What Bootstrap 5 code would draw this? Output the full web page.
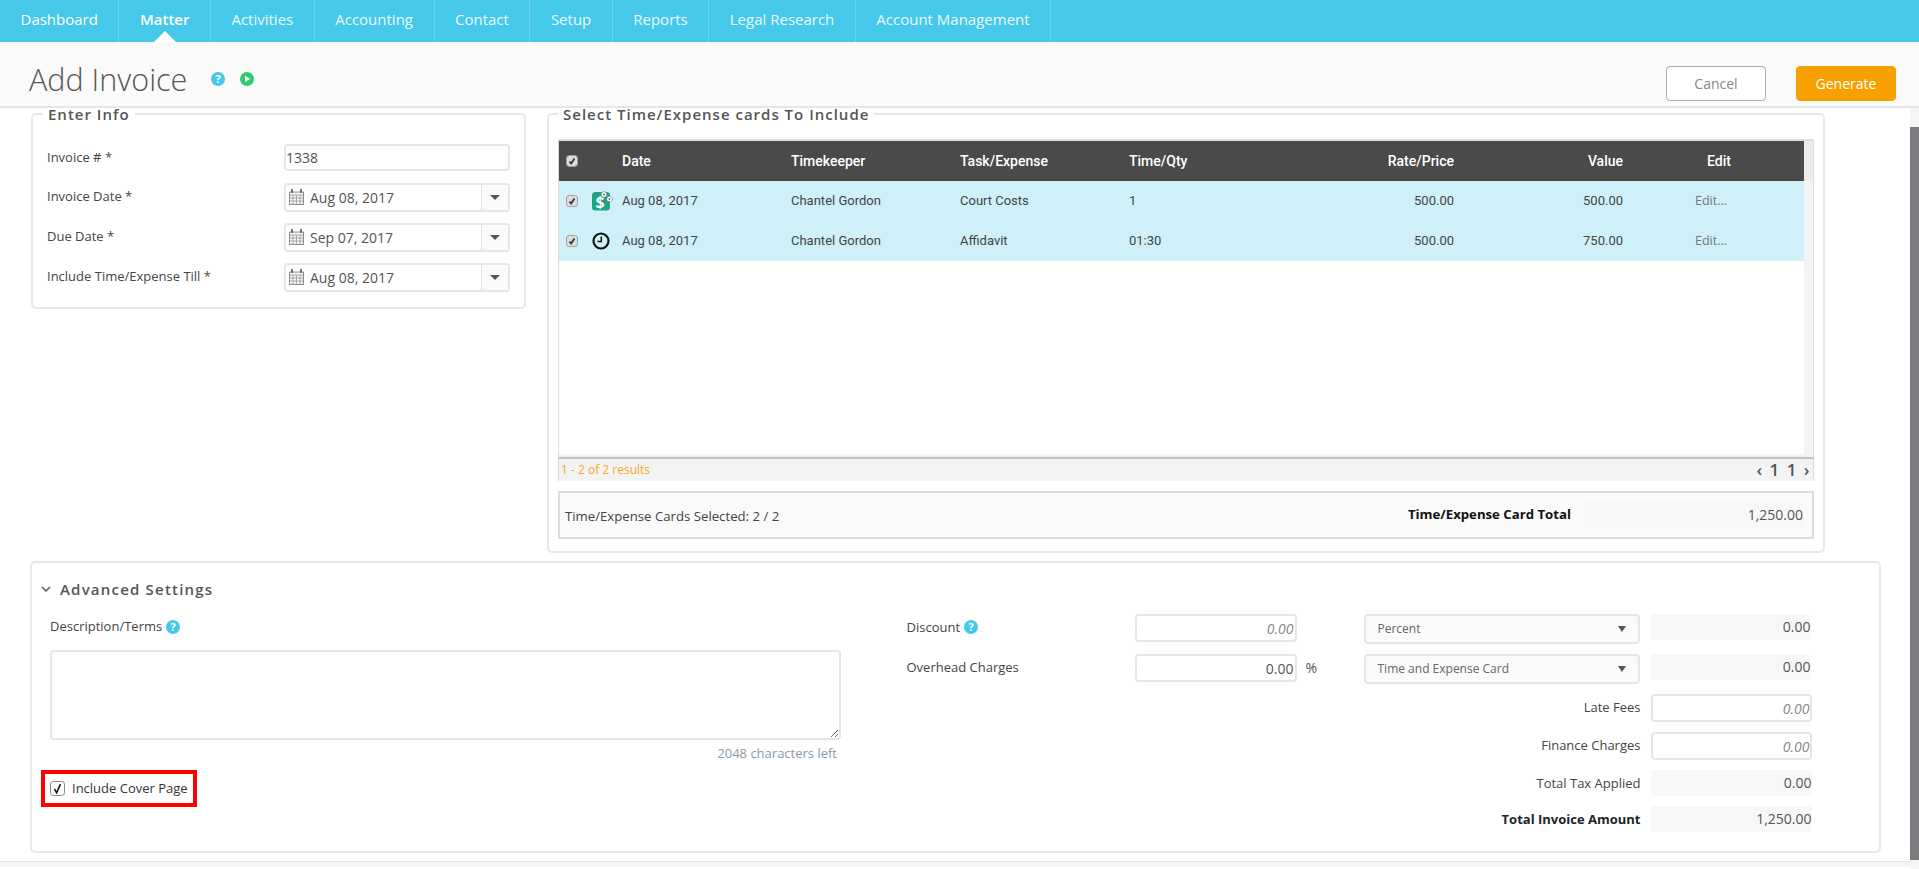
<!DOCTYPE html>
<html lang="en">
<head>
<meta charset="utf-8">
<title>Add Invoice</title>
<link rel="stylesheet" href="https://cdn.jsdelivr.net/npm/bootstrap@5.3.0/dist/css/bootstrap.min.css">
<style>
html,body{height:869px;overflow:hidden}
body{font-family:"Open Sans","Noto Sans",sans-serif;font-size:13px;color:#444;background:#fff}
.top-nav{background:#45c8ea;height:42px}
.top-link{height:42px;padding:0 20.5px;color:#eafaff;font-size:15px;line-height:38px;border-right:1px solid rgba(255,255,255,.22);position:relative;font-weight:400}
.top-link:hover{color:#fff}
.top-link.on{color:#fff;font-weight:600}
.top-link.on::after{content:"";position:absolute;left:50%;bottom:0;margin-left:-11px;border:11px solid transparent;border-top:0;border-bottom-color:#fff}
.title-bar{height:66px;background:#fafafa;border-bottom:2px solid #e6e6e6;padding:9px 23px 0 29px}
.page-title{font-size:30.5px;font-weight:300;color:#555;margin:0;line-height:40px}
.ico{display:block;flex:none}
.btn-group-top{align-self:flex-start;margin-top:15px}
.btn-cancel,.btn-gen{width:100px;height:35px;font-size:14px;padding:0;border-radius:4px}
.btn-cancel{background:#fff;border:1px solid #aaa;color:#888;margin-right:30px}
.btn-gen{background:#f7a000;border:1px solid #f7a000;color:#fff}
.page-body{height:761px}
.main-area{width:1910px;padding:0 29px 0 30px}
.top-boxes{margin-top:-2px}
.sbar{width:9px;background:#f5f5f5}
.sbar-thumb{height:733px;margin-top:19px;background:#7b7b80}
.box{border:2px solid #e8e8e8;border-radius:5px;margin:0;min-width:0}
.box legend{float:none;width:auto;font-size:15px;font-weight:600;letter-spacing:1px;color:#555;padding:0 5px;margin:0;line-height:16px}
.info-box{width:495px;height:203px;margin-left:1px;padding:22px 14px 0 14px;flex:none}
.info-box legend{margin-left:-4px}
.cards-box{width:1278px;height:447px;margin-left:21px;padding:17px 9px 0 9px;flex:none}
.cards-box legend{margin-left:0}
.f-row{height:40px;display:flex;align-items:center;justify-content:space-between}
.f-row.first{height:27px;margin-bottom:6px}
.f-label{font-size:13px;color:#444;margin:0}
.f-input{width:226px;height:27px;padding:0;font-size:14px;color:#555;border:2px solid #e6e6e6;border-radius:4px}
.date-ctl{width:226px;height:29px;border:2px solid #e6e6e6;border-radius:4px;font-size:14px;color:#555;background:#fff}
.date-val{padding-left:6px}
.date-cal{margin-left:3px}
.date-drop{width:27px;height:100%;border-left:1px solid #e0e0e0;background:#fafafa;display:flex;align-items:center;justify-content:center;margin-left:auto}
.tri{width:0;height:0;border-left:5px solid transparent;border-right:5px solid transparent;border-top:5px solid #555}
.tbl-outer{border:1px solid #ddd;border-top-width:2px;border-bottom:0;height:318px;background:#fff}
.tbl-main{width:1245px;flex:none}
.tbl-gutter{flex:1;background:#f4f4f4}
.tbl-gutter-top{height:40px;background:#ececec}
.inv-table{table-layout:fixed;width:1245px;margin:0;font-family:Roboto,sans-serif;font-size:13px}
.inv-table th,.inv-table td{height:40px;padding:0 3px;vertical-align:middle;border:0;white-space:nowrap;box-shadow:none}
.inv-table thead th{background:#4a4a4a;color:#fff;font-weight:500;font-size:14px}
.inv-table tbody td{background:#cff0f9;color:#444}
.inv-table .chk-cell{padding-left:7px}
.inv-table .edit-head{text-align:center;padding-left:8px;padding-right:0}
.inv-table .edit-cell{padding-left:69px;font-family:"Open Sans",sans-serif;font-size:12.5px;color:#777}
.g-check{width:12px;height:12px;margin:0;display:block;float:none;border:1px solid #a0a0a0;border-radius:2px;background-color:#dcdcdc;background-size:100%}
.g-check:checked{background-color:#dcdcdc;border-color:#a0a0a0;background-image:url("data:image/svg+xml,%3csvg xmlns='http://www.w3.org/2000/svg' viewBox='0 0 12 12'%3e%3cpath fill='none' stroke='%23333' stroke-width='2' d='M3 6.500l2 2.500 4-6'/%3e%3c/svg%3e")}
.g-check:focus{box-shadow:none;border-color:#a0a0a0}
.tbl-foot{height:24px;background:#f3f3f3;border-top:2px solid #c4c4c4;box-shadow:0 -2px 2px rgba(0,0,0,.08);padding:0 2px 0 2px;border-left:1px solid #ddd;border-right:1px solid #ddd}
.res-text{color:#f7a81b;font-size:12px}
.pager{color:#555;font-size:17px;font-weight:600;letter-spacing:1.5px}
.sum-box{height:48px;margin-top:10px;background:#fafafa;border:2px solid #dcdcdc;padding:0 9px 0 5px}
.sum-left{padding-top:4px;color:#444;font-size:13.2px}
.sum-label{font-weight:700;color:#111;font-size:13.2px}
.sum-val{width:220px;height:26px;background:#f7f7f7;margin-left:12px;text-align:right;line-height:26px;color:#555;font-size:14px}
.adv-box{width:1851px;height:292px;margin-top:8px;padding:16px 0 0 0;flex:none}
.adv-head{padding-left:9px;height:20px}
.adv-title{font-size:15px;font-weight:600;letter-spacing:1.2px;color:#555;margin:0 0 0 9px;line-height:20px}
.adv-cols{margin-top:15px}
.adv-left{width:811px;padding-left:18px;margin-right:63.5px;flex:none}
.adv-right{width:905px;flex:none}
.lbl{color:#444;font-size:13px;margin:0}
.terms-head{height:26px}
.terms{width:791px;height:90px;margin-top:10px;display:block;border:2px solid #e6e6e6;border-radius:4px}
.chars{width:787px;text-align:right;color:#8a9bab;font-size:13px;margin-top:4px;height:18px}
.cover-box{width:156px;height:37px;margin:8px 0 0 -9px;border:4px solid #f00;padding-left:5px;font-size:13px;color:#333}
.cover-chk{width:15px;height:15px;margin:0;flex:none;float:none;border:1px solid #888;border-radius:0;background-color:#fff}
.cover-chk:checked{background-color:#fff;border-color:#888;background-image:url("data:image/svg+xml,%3csvg xmlns='http://www.w3.org/2000/svg' viewBox='0 0 15 15'%3e%3cpath fill='none' stroke='%23111' stroke-width='1.8' d='M4 8l2.500 4.500L11 2.500'/%3e%3c/svg%3e")}
.cover-chk:focus{box-shadow:none;border-color:#888}
.cover-text{margin-left:7px}
.calc-row{display:flex;align-items:flex-start}
.h40{height:40px}
.h38{height:38px}
.h36{height:36px}
.c-name{width:228px;line-height:26px}
.c-num{width:162px;height:28px;border:2px solid #e6e6e6;border-radius:4px;text-align:right;font-size:14px;padding:0 1px;color:#555}
.c-num::placeholder{color:#888;font-style:italic}
.c-pct{width:67px;padding-left:9px;line-height:28px;font-size:14px;color:#555}
.c-sel{width:276px;height:30px;font-size:12px;padding:0 12px;background-color:#fafafa;border:2px solid #e6e6e6;border-radius:4px;color:#666;display:flex;align-items:center;justify-content:space-between}
.tri-sm{border-left-width:4px;border-right-width:4px;border-top:6px solid #555}
.c-val{width:161px;height:26px;margin-left:10px;background:#f7f7f7;border-radius:4px;text-align:right;line-height:26px;font-size:14px;color:#555}
.c-inp{width:161px;height:28px;margin-left:10px;border:2px solid #e6e6e6;border-radius:4px;text-align:right;font-size:14px;padding:0}
.c-inp::placeholder{color:#888;font-style:italic}
.c-lbl{width:734px;text-align:right;line-height:26px;color:#444;font-size:13px}
.foot-strip{height:6px;background:#f5f5f5;border-top:1px solid #e3e3e3;margin:8px -29px 0 -30px}
</style>
</head>
<body>
<ul class="nav top-nav">
  <li class="nav-item"><a class="nav-link top-link" href="#">Dashboard</a></li>
  <li class="nav-item"><a class="nav-link top-link on" href="#">Matter</a></li>
  <li class="nav-item"><a class="nav-link top-link" href="#">Activities</a></li>
  <li class="nav-item"><a class="nav-link top-link" href="#">Accounting</a></li>
  <li class="nav-item"><a class="nav-link top-link" href="#">Contact</a></li>
  <li class="nav-item"><a class="nav-link top-link" href="#">Setup</a></li>
  <li class="nav-item"><a class="nav-link top-link" href="#">Reports</a></li>
  <li class="nav-item"><a class="nav-link top-link" href="#">Legal Research</a></li>
  <li class="nav-item"><a class="nav-link top-link" href="#">Account Management</a></li>
</ul>

<div class="title-bar d-flex align-items-center">
  <h1 class="page-title">Add Invoice</h1>
  <svg class="ico ms-4" width="14" height="14" viewBox="0 0 14 14"><circle cx="7" cy="7" r="7" fill="#45c8ea"/><text x="7" y="11" text-anchor="middle" font-family="Open Sans" font-weight="700" font-size="11" fill="#fff">?</text></svg>
  <svg class="ico" style="margin-left:15px" width="14" height="14" viewBox="0 0 14 14"><circle cx="7" cy="7" r="7" fill="#2ecc71"/><path d="M5 3.800v6.400L10.200 7z" fill="#fff"/></svg>
  <div class="ms-auto d-flex btn-group-top">
    <button class="btn btn-cancel" type="button">Cancel</button>
    <button class="btn btn-gen" type="button">Generate</button>
  </div>
</div>

<div class="page-body d-flex">
  <div class="main-area">
    <div class="d-flex align-items-start top-boxes">
      <fieldset class="box info-box">
        <legend>Enter Info</legend>
        <div class="f-row first"><label class="f-label">Invoice # *</label><input class="form-control f-input" value="1338"></div>
        <div class="f-row"><label class="f-label">Invoice Date *</label>
          <div class="date-ctl d-flex align-items-center"><svg class="ico date-cal" width="15" height="16" viewBox="0 0 15 16"><path d="M.5 3h14v12.500H.5z" fill="#f3f3f3" stroke="#888"/><path d="M.5 6h14M.5 9h14M.5 12h14M4 6v9M7.500 6v9M11 6v9" stroke="#999" stroke-width=".8"/><path d="M3 0v4M12 0v4" stroke="#777" stroke-width="2"/></svg><span class="date-val">Aug 08, 2017</span><span class="date-drop"><span class="tri"></span></span></div></div>
        <div class="f-row"><label class="f-label">Due Date *</label>
          <div class="date-ctl d-flex align-items-center"><svg class="ico date-cal" width="15" height="16" viewBox="0 0 15 16"><path d="M.5 3h14v12.500H.5z" fill="#f3f3f3" stroke="#888"/><path d="M.5 6h14M.5 9h14M.5 12h14M4 6v9M7.500 6v9M11 6v9" stroke="#999" stroke-width=".8"/><path d="M3 0v4M12 0v4" stroke="#777" stroke-width="2"/></svg><span class="date-val">Sep 07, 2017</span><span class="date-drop"><span class="tri"></span></span></div></div>
        <div class="f-row"><label class="f-label">Include Time/Expense Till *</label>
          <div class="date-ctl d-flex align-items-center"><svg class="ico date-cal" width="15" height="16" viewBox="0 0 15 16"><path d="M.5 3h14v12.500H.5z" fill="#f3f3f3" stroke="#888"/><path d="M.5 6h14M.5 9h14M.5 12h14M4 6v9M7.500 6v9M11 6v9" stroke="#999" stroke-width=".8"/><path d="M3 0v4M12 0v4" stroke="#777" stroke-width="2"/></svg><span class="date-val">Aug 08, 2017</span><span class="date-drop"><span class="tri"></span></span></div></div>
      </fieldset>

      <fieldset class="box cards-box">
        <legend>Select Time/Expense cards To Include</legend>
        <div class="tbl-outer d-flex">
          <div class="tbl-main">
            <table class="table inv-table">
              <colgroup><col style="width:30px"><col style="width:30px"><col style="width:169px"><col style="width:169px"><col style="width:169px"><col style="width:169px"><col style="width:162px"><col style="width:169px"><col style="width:178px"></colgroup>
              <thead><tr><th class="chk-cell"><input class="form-check-input g-check" type="checkbox" checked></th><th></th><th>Date</th><th>Timekeeper</th><th>Task/Expense</th><th>Time/Qty</th><th class="text-end">Rate/Price</th><th class="text-end">Value</th><th class="edit-head">Edit</th></tr></thead>
              <tbody>
                <tr><td class="chk-cell"><input class="form-check-input g-check" type="checkbox" checked></td>
                  <td><svg class="ico" width="22" height="20" viewBox="0 0 22 20"><rect x="0" y="1" width="18" height="18.500" rx="3.500" fill="#1aa584"/><text x="8" y="16.500" text-anchor="middle" font-family="Open Sans" font-weight="700" font-size="16" fill="#fff">$</text><circle cx="12" cy="3.500" r="2.800" fill="#fff" stroke="#666" stroke-width=".9" stroke-dasharray="1 .7"/><circle cx="17.500" cy="8" r="2.800" fill="#fff" stroke="#666" stroke-width=".9" stroke-dasharray="1 .7"/><path d="M11 3.500h2M12 2.500v2M16.500 8h2M17.500 7v2" stroke="#444" stroke-width=".7"/></svg></td>
                  <td>Aug 08, 2017</td><td>Chantel Gordon</td><td>Court Costs</td><td>1</td><td class="text-end">500.00</td><td class="text-end">500.00</td><td class="edit-cell">Edit...</td></tr>
                <tr><td class="chk-cell"><input class="form-check-input g-check" type="checkbox" checked></td>
                  <td><svg class="ico" width="22" height="20" viewBox="0 0 22 20"><circle cx="9" cy="10" r="7.500" fill="none" stroke="#111" stroke-width="2.200"/><path d="M9.300 5.500v5H5.500" fill="none" stroke="#111" stroke-width="1.500"/></svg></td>
                  <td>Aug 08, 2017</td><td>Chantel Gordon</td><td>Affidavit</td><td>01:30</td><td class="text-end">500.00</td><td class="text-end">750.00</td><td class="edit-cell">Edit...</td></tr>
              </tbody>
            </table>
          </div>
          <div class="tbl-gutter"><div class="tbl-gutter-top"></div></div>
        </div>
        <div class="tbl-foot d-flex align-items-center justify-content-between"><span class="res-text">1 - 2 of 2 results</span><span class="pager">‹ 1 1 ›</span></div>
        <div class="sum-box d-flex align-items-center justify-content-between">
          <span class="sum-left">Time/Expense Cards Selected: 2 / 2</span>
          <span class="d-flex align-items-center"><span class="sum-label">Time/Expense Card Total</span><span class="sum-val">1,250.00</span></span>
        </div>
      </fieldset>
    </div>

    <div class="box adv-box">
      <div class="adv-head d-flex align-items-center">
        <svg class="ico" width="10" height="7" viewBox="0 0 10 7"><path d="M1 1l4 4 4-4" fill="none" stroke="#555" stroke-width="1.500"/></svg>
        <h2 class="adv-title">Advanced Settings</h2>
      </div>
      <div class="adv-cols d-flex">
        <div class="adv-left">
          <div class="terms-head d-flex align-items-center gap-1"><span class="lbl">Description/Terms</span>
            <svg class="ico" width="14" height="14" viewBox="0 0 14 14"><circle cx="7" cy="7" r="7" fill="#45c8ea"/><text x="7" y="11" text-anchor="middle" font-family="Open Sans" font-weight="700" font-size="11" fill="#fff">?</text></svg></div>
          <textarea class="form-control terms"></textarea>
          <div class="chars">2048 characters left</div>
          <div class="cover-box d-flex align-items-center">
            <input class="form-check-input cover-chk" type="checkbox" checked id="cv"><label class="cover-text" for="cv">Include Cover Page</label>
          </div>
        </div>
        <div class="adv-right">
          <div class="calc-row h40"><div class="c-name d-flex align-items-center gap-1"><span class="lbl">Discount</span><svg class="ico" width="14" height="14" viewBox="0 0 14 14"><circle cx="7" cy="7" r="7" fill="#45c8ea"/><text x="7" y="11" text-anchor="middle" font-family="Open Sans" font-weight="700" font-size="11" fill="#fff">?</text></svg></div>
            <input class="form-control c-num" placeholder="0.00"><div class="c-pct"></div>
            <div class="c-sel"><span>Percent</span><span class="tri tri-sm"></span></div>
            <div class="c-val">0.00</div></div>
          <div class="calc-row h40"><div class="c-name"><span class="lbl">Overhead Charges</span></div>
            <input class="form-control c-num" value="0.00"><div class="c-pct">%</div>
            <div class="c-sel"><span>Time and Expense Card</span><span class="tri tri-sm"></span></div>
            <div class="c-val">0.00</div></div>
          <div class="calc-row h38"><div class="c-lbl">Late Fees</div><input class="form-control c-inp" placeholder="0.00"></div>
          <div class="calc-row h38"><div class="c-lbl">Finance Charges</div><input class="form-control c-inp" placeholder="0.00"></div>
          <div class="calc-row h36"><div class="c-lbl">Total Tax Applied</div><div class="c-val">0.00</div></div>
          <div class="calc-row"><div class="c-lbl fw-bold text-dark">Total Invoice Amount</div><div class="c-val">1,250.00</div></div>
        </div>
      </div>
    </div>
    <div class="foot-strip"></div>
  </div>
  <div class="sbar"><div class="sbar-thumb"></div></div>
</div>
<script src="https://cdn.jsdelivr.net/npm/bootstrap@5.3.0/dist/js/bootstrap.bundle.min.js"></script>
</body>
</html>
